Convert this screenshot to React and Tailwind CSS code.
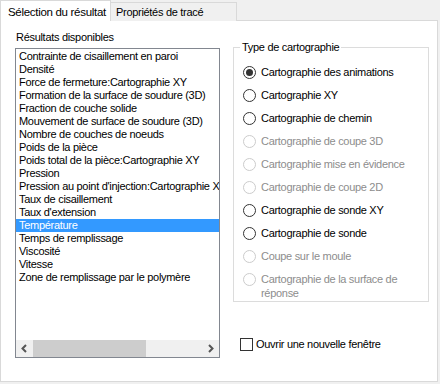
import React from "react";

const results = [
  "Contrainte de cisaillement en paroi",
  "Densité",
  "Force de fermeture:Cartographie XY",
  "Formation de la surface de soudure (3D)",
  "Fraction de couche solide",
  "Mouvement de surface de soudure (3D)",
  "Nombre de couches de noeuds",
  "Poids de la pièce",
  "Poids total de la pièce:Cartographie XY",
  "Pression",
  "Pression au point d'injection:Cartographie XY",
  "Taux de cisaillement",
  "Taux d'extension",
  "Température",
  "Temps de remplissage",
  "Viscosité",
  "Vitesse",
  "Zone de remplissage par le polymère",
];

const mapTypes = [
  { label: "Cartographie des animations", checked: true },
  { label: "Cartographie XY" },
  { label: "Cartographie de chemin" },
  { label: "Cartographie de coupe 3D", disabled: true },
  { label: "Cartographie mise en évidence", disabled: true },
  { label: "Cartographie de coupe 2D", disabled: true },
  { label: "Cartographie de sonde XY" },
  { label: "Cartographie de sonde" },
  { label: "Coupe sur le moule", disabled: true },
  { label: "Cartographie de la surface de réponse", disabled: true },
];

function Radio({ label, checked, disabled }) {
  return (
    <div className="flex items-start gap-[5px] h-[23px]">
      <span
        className={
          "mt-[1px] w-[13px] h-[13px] shrink-0 rounded-full border flex items-center justify-center bg-white " +
          (disabled ? "border-[#cccccc]" : "border-[#333333]")
        }
      >
        {checked && <span className="w-[7px] h-[7px] rounded-full bg-[#333333]" />}
      </span>
      <span className={"leading-[14px] " + (disabled ? "text-[#8d8d8d]" : "text-black")}>{label}</span>
    </div>
  );
}

export default function App() {
  return (
    <div
      className="w-[440px] h-[384px] bg-[#f0f0f0] text-[11px] tracking-[-0.3px] text-black overflow-hidden"
      style={{ fontFamily: '"Liberation Sans", Arial, sans-serif' }}
    >
      {/* tabs */}
      <div className="flex h-[21px] items-end">
        <div className="relative z-10 h-[21px] w-[111px] bg-white border-l border-t border-r border-[#d9d9d9] pl-[7px] pt-[4px] text-[11.5px] tracking-[-0.3px] leading-[14px] whitespace-nowrap">
          Sélection du résultat
        </div>
        <div className="h-[19px] w-[126px] bg-[#f0f0f0] border-t border-r border-[#d9d9d9] pl-[5px] pt-[2px] leading-[14px] whitespace-nowrap">
          Propriétés de tracé
        </div>
      </div>

      {/* panel */}
      <div className="-mt-px w-[438px] h-[362px] bg-white border border-[#d9d9d9] flex">
        <div className="pl-[14px] pt-[9px]">
          <div className="leading-[14px] mb-[4px] pl-[1px]">Résultats disponibles</div>
          <div className="w-[205px] h-[310px] border border-[#828790] flex flex-col">
            <div className="flex-1 overflow-hidden pt-[1px]">
              {results.map((r) => (
                <div
                  key={r}
                  className={
                    "h-[13px] leading-[13px] pl-[3px] whitespace-nowrap " +
                    (r === "Température" ? "bg-[#3399ff] text-white" : "")
                  }
                >
                  {r}
                </div>
              ))}
            </div>
            <div className="h-[17px] bg-[#f0f0f0] flex items-center">
              <div className="w-[17px] h-[17px] flex items-center justify-center">
                <svg width="9" height="9" viewBox="0 0 9 9">
                  <path d="M6 1 L2.5 4.5 L6 8" stroke="#555555" strokeWidth="2" fill="none" />
                </svg>
              </div>
              <div className="w-[113px] h-[17px] bg-[#cdcdcd]" />
              <div className="flex-1" />
              <div className="w-[17px] h-[17px] flex items-center justify-center">
                <svg width="9" height="9" viewBox="0 0 9 9">
                  <path d="M3 1 L6.5 4.5 L3 8" stroke="#555555" strokeWidth="2" fill="none" />
                </svg>
              </div>
            </div>
          </div>
        </div>

        <div className="pl-[13px] pt-[26px] flex flex-col">
          <div className="relative w-[196px] h-[255px] border border-[#dcdcdc] pl-[9px] pt-[17px]">
            <div className="absolute -top-[8px] left-[6px] bg-white px-[2px] leading-[14px]">
              Type de cartographie
            </div>
            {mapTypes.map((m) => (
              <Radio key={m.label} {...m} />
            ))}
          </div>
          <div className="mt-[35px] ml-[7px] flex items-center gap-[3px]">
            <span className="w-[13px] h-[13px] border border-[#333333] bg-white" />
            <span className="leading-[14px]">Ouvrir une nouvelle fenêtre</span>
          </div>
        </div>
      </div>
    </div>
  );
}
